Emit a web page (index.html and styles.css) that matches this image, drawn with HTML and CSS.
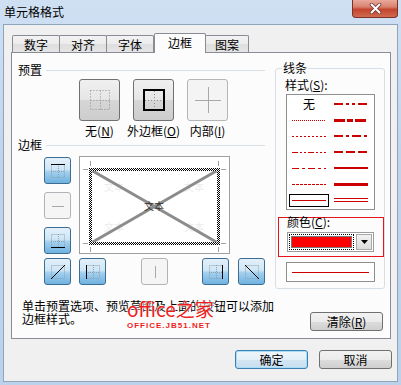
FILE: index.html
```html
<!DOCTYPE html>
<html lang="zh-CN">
<head>
<meta charset="utf-8">
<title>单元格格式</title>
<link rel="stylesheet" href="styles.css">
</head>
<body>
<div class="window">
  <div class="titlebar">
    <span class="title">单元格格式</span>
    <div class="close">
      <svg width="13" height="11" viewBox="0 0 13 11"><path d="M2.5 1.5L10.5 9.5M10.5 1.5L2.5 9.5" stroke="#6a3a34" stroke-width="3.6" stroke-linecap="round"/><path d="M2.5 1.5L10.5 9.5M10.5 1.5L2.5 9.5" stroke="#fff" stroke-width="2" stroke-linecap="round"/></svg>
    </div>
  </div>
  <div class="client">
    <div class="tabs">
      <div class="tab">数字</div>
      <div class="tab">对齐</div>
      <div class="tab">字体</div>
      <div class="tab sel">边框</div>
      <div class="tab last">图案</div>
    </div>
    <div class="panel">
      <div class="top">
        <div class="left">
          <div class="head"><span>预置</span><i></i></div>
          <div class="presets">
            <div class="preset">
              <button class="pbtn"><svg width="22" height="22"><g fill="none" stroke="#8c8c8c" stroke-dasharray="1 2"><rect x="1.5" y="1.5" width="19" height="19"/><path d="M11.5 1.5V20.5M1.5 11.5H20.5"/></g></svg></button>
              <span>无(<u>N</u>)</span>
            </div>
            <div class="preset">
              <button class="pbtn"><svg width="24" height="24"><g stroke="#8c8c8c" stroke-dasharray="1 2"><path d="M12.5 3V21M3 12.5H21"/></g><rect x="2" y="2" width="20" height="20" fill="none" stroke="#000" stroke-width="2"/></svg></button>
              <span>外边框(<u>O</u>)</span>
            </div>
            <div class="preset">
              <button class="pbtn off"><svg width="26" height="26"><path d="M13.5 0V26M0 13.5H26" stroke="#a8a8a8"/></svg></button>
              <span>内部(<u>I</u>)</span>
            </div>
          </div>
          <div class="head head2"><span>边框</span><i></i></div>
          <div class="bgrid">
            <div class="lcol">
              <button class="bb"><svg width="14" height="14"><g fill="none" stroke="#8fa0ad" stroke-dasharray="1 1"><rect x=".5" y=".5" width="13" height="13"/><path d="M7.5 0V14M0 7.5H14"/></g><path d="M0 .5H14" stroke="#000"/></svg></button>
              <button class="bb off"><svg width="14" height="14"><path d="M1 7.5H13" stroke="#a8a8a8"/></svg></button>
              <button class="bb"><svg width="14" height="14"><g fill="none" stroke="#8fa0ad" stroke-dasharray="1 1"><rect x=".5" y=".5" width="13" height="13"/><path d="M7.5 0V14M0 7.5H14"/></g><path d="M0 13.5H14" stroke="#000"/></svg></button>
            </div>
            <div class="preview">
              <svg width="149" height="96">
                <defs>
                  <pattern id="chk" width="2" height="2" patternUnits="userSpaceOnUse"><rect width="2" height="2" fill="#fff"/><rect width="1" height="1" fill="#000"/><rect x="1" y="1" width="1" height="1" fill="#000"/></pattern>
                </defs>
                <g fill="#ececec" font-size="10" font-family="Noto Sans CJK SC, sans-serif">
                  <text x="24" y="34">文本</text><text x="104" y="34">文本</text>
                  <text x="24" y="74">文本</text><text x="104" y="74">文本</text>
                </g>
                <g stroke="#a0a0a0">
                  <path d="M10.5 4V9M3 12.5H8M138.5 4V9M141 12.5H146M10.5 90V95M3 86.5H8M138.5 90V95M141 86.5H146"/>
                </g>
                <path d="M11 13L138 86M11 86L138 13" stroke="#8c8c8c" stroke-width="3"/>
                <text x="64" y="53" font-size="10" fill="#333" font-family="Noto Sans CJK SC, sans-serif">文本</text>
                <rect x="10.5" y="12.5" width="128" height="74" fill="none" stroke="url(#chk)" stroke-width="3"/>
              </svg>
            </div>
            <button class="bb"><svg width="14" height="14"><g fill="none" stroke="#8fa0ad" stroke-dasharray="1 1"><rect x=".5" y=".5" width="13" height="13"/></g><path d="M0 14L14 0" stroke="#000"/></svg></button>
            <div class="brow">
              <button class="bb"><svg width="14" height="14"><g fill="none" stroke="#8fa0ad" stroke-dasharray="1 1"><rect x=".5" y=".5" width="13" height="13"/><path d="M7.5 0V14M0 7.5H14"/></g><path d="M.5 0V14" stroke="#000"/></svg></button>
              <button class="bb off m35"><svg width="14" height="14"><path d="M7.5 1V13" stroke="#a8a8a8"/></svg></button>
              <button class="bb m34"><svg width="14" height="14"><g fill="none" stroke="#8fa0ad" stroke-dasharray="1 1"><rect x=".5" y=".5" width="13" height="13"/><path d="M7.5 0V14M0 7.5H14"/></g><path d="M13.5 0V14" stroke="#000"/></svg></button>
              <button class="bb m9"><svg width="14" height="14"><g fill="none" stroke="#8fa0ad" stroke-dasharray="1 1"><rect x=".5" y=".5" width="13" height="13"/></g><path d="M0 0L14 14" stroke="#000"/></svg></button>
            </div>
          </div>
        </div>
        <div class="group">
          <div class="legend">线条</div>
          <div class="lab">样式(<u>S</u>):</div>
          <div class="stylelist">
            <div class="cell">无</div>
            <div class="cell"><svg class="ln" width="34" height="16"><path d="M0 8H34" stroke-width="2" stroke-dasharray="9 3 3 3 3 3"/></svg></div>
            <div class="cell"><svg class="ln" width="34" height="16"><path d="M0 8.5H34" stroke-dasharray="1 1"/></svg></div>
            <div class="cell"><svg class="ln" width="34" height="16"><path d="M0 8.5H34" stroke-width="3" stroke-dasharray="11 2 6 2"/></svg></div>
            <div class="cell"><svg class="ln" width="34" height="16"><path d="M0 8.5H34" stroke-dasharray="2 2"/></svg></div>
            <div class="cell"><svg class="ln" width="34" height="16"><path d="M0 8H34" stroke-width="2" stroke-dasharray="9 3 3 3"/></svg></div>
            <div class="cell"><svg class="ln" width="34" height="16"><path d="M0 8.5H34" stroke-dasharray="6 2 2 2 2 2"/></svg></div>
            <div class="cell"><svg class="ln" width="34" height="16"><path d="M0 8H34" stroke-width="2" stroke-dasharray="9 3"/></svg></div>
            <div class="cell"><svg class="ln" width="34" height="16"><path d="M0 8.5H34" stroke-dasharray="7 3 3 3"/></svg></div>
            <div class="cell"><svg class="ln" width="34" height="16"><path d="M0 8H34" stroke-width="2"/></svg></div>
            <div class="cell"><svg class="ln" width="34" height="16"><path d="M0 8.5H34" stroke-dasharray="3 1"/></svg></div>
            <div class="cell"><svg class="ln" width="34" height="16"><path d="M0 8.5H34" stroke-width="3"/></svg></div>
            <div class="cell s"><div class="selbox"><svg class="ln" width="34" height="11"><path d="M0 5.5H34"/></svg></div></div>
            <div class="cell"><svg class="ln" width="34" height="16"><path d="M0 6.5H34M0 9.5H34"/></svg></div>
          </div>
          <div class="colorwrap">
            <div class="lab">颜色(<u>C</u>):</div>
            <div class="combo">
              <div class="field"><div class="swatch"></div></div>
              <div class="arrow"><svg width="7" height="4"><path d="M0 0H7L3.5 4Z" fill="#000"/></svg></div>
            </div>
          </div>
          <div class="sample"><i></i></div>
        </div>
      </div>
      <div class="bottom">
        <div class="hint">单击预置选项、预览草图及上面的按钮可以添加<br>边框样式。</div>
        <button class="btn clear">清除(<u>R</u>)</button>
      </div>
      <div class="wm">
        <div class="wm1">office之家</div>
        <div class="wm2">OFFICE.JB51.NET</div>
      </div>
    </div>
    <div class="footer">
      <button class="btn ok">确定</button>
      <button class="btn">取消</button>
    </div>
  </div>
</div>
</body>
</html>
```
FILE: styles.css
```css
* { box-sizing: border-box; }
html, body { margin: 0; padding: 0; }
body {
  width: 401px; height: 385px; overflow: hidden;
  font-family: "Noto Sans CJK SC", "Noto Sans", sans-serif;
  font-size: 12px; color: #000; background: #c4d8ee;
}
u { text-decoration: underline; text-underline-offset: 1px; }
button { font: inherit; color: inherit; padding: 0; margin: 0; }

.window {
  width: 401px; height: 385px; display: flex; flex-direction: column;
  background: linear-gradient(180deg, #cfe0f3 0%, #c0d5ec 40%, #bcd2eb 100%);
}
.titlebar { height: 24px; flex: none; display: flex; align-items: flex-start; }
.title { margin: 5px 0 0 4px; line-height: 14px; }
.close {
  margin-left: auto; margin-right: 3px; width: 46px; height: 18px;
  border: 1px solid #7d3128; border-top: 0; border-radius: 0 0 4px 4px;
  background: linear-gradient(180deg, #e9a99b 0%, #d98270 40%, #c5452e 55%, #cf6a4f 100%);
  display: flex; align-items: center; justify-content: center;
}

.client {
  margin: 0 3px; height: 358px; flex: none; background: #f0f0f0;
  border: 1px solid #8ea4bd; display: flex; flex-direction: column;
}

.tabs { height: 27px; flex: none; display: flex; align-items: flex-end; padding-left: 8px; }
.tab {
  width: 48px; height: 17px; border: 1px solid #898c95; border-bottom: 0;
  border-radius: 2px 2px 0 0;
  background: linear-gradient(180deg, #f3f3f3 0%, #ebebeb 50%, #dedede 51%, #e5e5e5 100%);
  text-align: center; line-height: 16px; padding-top: 1px;
}
.tab + .tab { margin-left: -1px; }
.tab.sel {
  width: 52px; height: 20px; margin-left: 0; margin-bottom: -1px;
  background: #fcfcfc; position: relative; z-index: 1; line-height: 18px; padding-top: 0;
}
.tab.last { width: 44px; }

.panel {
  margin-left: 7px; width: 380px; height: 287px; flex: none;
  border: 1px solid #898c95; background: #fcfcfc; position: relative;
  display: flex; flex-direction: column;
}
.top { display: flex; height: 236px; flex: none; }
.left { width: 258px; flex: none; padding-top: 10px; }
.head { display: flex; align-items: center; height: 14px; line-height: 14px; margin: 0 5px 0 6px; }
.head i { flex: 1; height: 1px; background: #d5dfe5; margin-left: 4px; }
.head2 { margin-top: 1px; }

.presets { display: flex; gap: 13px; margin: 2px 0 0 67px; }
.preset { width: 41px; display: flex; flex-direction: column; align-items: center; }
.preset span { margin-top: 4px; line-height: 12px; white-space: nowrap; }
.pbtn {
  width: 41px; height: 42px; border: 1px solid #707070; border-radius: 3px;
  background: linear-gradient(180deg, #f0f0f0 0%, #e6e6e6 50%, #d6d6d6 51%, #cdcdcd 100%);
  display: flex; align-items: center; justify-content: center;
}
.pbtn.off { border-color: #b5b5b5; background: #f4f4f4; }
.pbtn svg, .bb svg { display: block; }

.bgrid {
  display: grid; grid-template-columns: 27px 151px; grid-template-rows: 98px 27px;
  column-gap: 8px; row-gap: 4px; margin: 4px 0 0 32px;
}
.lcol { display: flex; flex-direction: column; gap: 8px; padding-top: 1px; }
.preview { border: 1px solid #a0a0a0; background: #fff; }
.preview svg { display: block; }
.brow { display: flex; }
.bb {
  width: 27px; height: 27px; flex: none; border: 1px solid #3d6e91; border-radius: 3px;
  background: linear-gradient(180deg, #e3f0fa 0%, #cfe6f6 45%, #a3d0ef 55%, #6fb2e0 100%);
  display: flex; align-items: center; justify-content: center;
}
.bb.off { border-color: #b0b4b8; background: #f5f5f5; }
.m35 { margin-left: 35px; }
.m34 { margin-left: 34px; }
.m9 { margin-left: 9px; }

.group {
  width: 110px; height: 221px; flex: none; margin: 15px 0 0 5px;
  border: 1px solid #d5dfe5; border-radius: 3px;
}
.legend { width: max-content; margin: -8px 0 0 6px; padding: 0 1px; line-height: 14px; background: #fcfcfc; }
.lab { line-height: 14px; margin: 3px 0 0 9px; }
.stylelist {
  width: 89px; height: 116px; margin: 2px 0 0 10px; border: 1px solid #8e8f8f; background: #fff;
  display: grid; grid-template-columns: 34px 34px; grid-auto-rows: 16px; column-gap: 8px;
  padding: 1px 0 0 5px;
}
.cell { display: flex; align-items: center; justify-content: center; line-height: 16px; }
.cell.s { justify-content: flex-start; align-items: flex-start; }
.selbox { width: 40px; height: 13px; flex: none; margin: 2px 0 0 -3px; border: 1px solid #000; padding-left: 2px; }
.ln { display: block; flex: none; }
.ln path { stroke: #cc0000; fill: none; }

.colorwrap { width: 106px; height: 40px; margin: 7px 0 0 2px; border: 1px solid #e8141b; }
.colorwrap .lab { margin: -2px 0 0 8px; line-height: 12px; }
.combo {
  width: 87px; height: 20px; margin: 4px 0 0 8px; border: 1px solid #9c9c9c; background: #fff;
  display: flex; padding: 1px;
}
.field { flex: 1; border: 1px dotted #000; padding: 1px; }
.swatch { height: 100%; background: #ff0000; border: 1px solid #7a7a7a; }
.arrow {
  width: 16px; margin-left: 2px; border: 1px solid #a8a8a8;
  background: linear-gradient(180deg, #f2f2f2, #dcdcdc);
  display: flex; align-items: center; justify-content: center;
}
.arrow svg { display: block; }
.sample {
  width: 89px; height: 20px; margin: 5px 0 0 10px; border: 1px solid #8e8f8f; background: #fff;
  display: flex; align-items: center; padding: 0 5px;
}
.sample i { flex: 1; height: 1px; background: #cc0000; }

.bottom { display: flex; margin-top: 10px; }
.hint { margin-left: 10px; line-height: 13px; white-space: nowrap; }
.clear { margin: 13px 7px 0 auto; }

.footer { display: flex; justify-content: flex-end; gap: 11px; padding-right: 5px; margin-top: 11px; }
.btn {
  width: 73px; height: 19px; flex: none; border: 1px solid #707070; border-radius: 3px;
  background: linear-gradient(180deg, #f2f2f2 0%, #ebebeb 50%, #dddddd 51%, #cfcfcf 100%);
  line-height: 17px; text-align: center;
}
.btn.ok {
  border-color: #3c7fb1; box-shadow: inset 0 0 0 1px #a9dcf5;
  background: linear-gradient(180deg, #eef6fb 0%, #e3eff8 50%, #d3e5f2 51%, #c8dfef 100%);
}

.wm { position: absolute; left: 115px; top: 246px; color: #ee1c1c; text-shadow: 0 0 2px #fff, 0 0 2px #fff; pointer-events: none; }
.wm1 { font-size: 19px; line-height: 19px; }
.wm2 { font-family: "Liberation Sans", sans-serif; font-weight: bold; font-size: 8px; letter-spacing: 1px; line-height: 8px; margin-top: 4px; }
```
